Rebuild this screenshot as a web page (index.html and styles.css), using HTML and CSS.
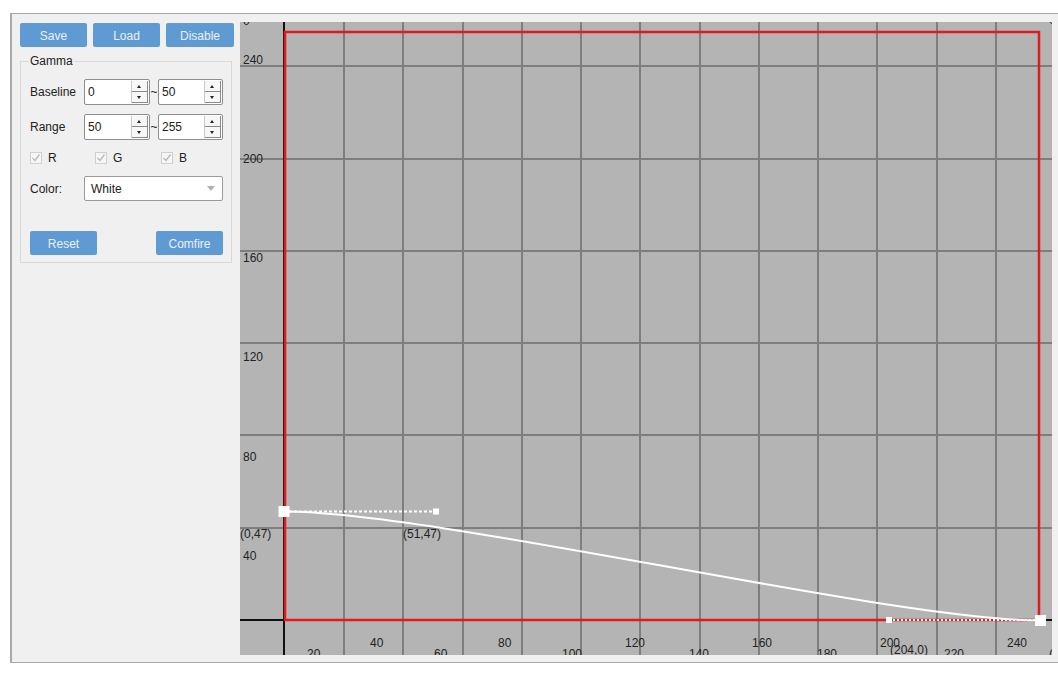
FILE: index.html
```html
<!DOCTYPE html>
<html>
<head>
<meta charset="utf-8">
<link rel="stylesheet" href="styles.css">
</head>
<body>
<div class="window">
  <aside class="side">
    <div class="toolbar">
      <button class="btn w67">Save</button>
      <button class="btn w67">Load</button>
      <button class="btn w68">Disable</button>
    </div>
    <fieldset class="gamma">
      <legend>Gamma</legend>
      <div class="row r1">
        <span class="lbl">Baseline</span>
        <div class="spin w66"><span class="val">0</span><div class="arrows"><i class="up"></i><i class="dn"></i></div></div>
        <span class="tilde">~</span>
        <div class="spin w65"><span class="val">50</span><div class="arrows"><i class="up"></i><i class="dn"></i></div></div>
      </div>
      <div class="row r2">
        <span class="lbl">Range</span>
        <div class="spin w66"><span class="val">50</span><div class="arrows"><i class="up"></i><i class="dn"></i></div></div>
        <span class="tilde">~</span>
        <div class="spin w65"><span class="val">255</span><div class="arrows"><i class="up"></i><i class="dn"></i></div></div>
      </div>
      <div class="checks">
        <label class="chk"><span class="box"><svg width="10" height="10" viewBox="0 0 10 10"><polyline points="1.5,5 4,7.5 8.5,1.5" fill="none" stroke="#b9b9b9" stroke-width="1.3"/></svg></span>R</label>
        <label class="chk"><span class="box"><svg width="10" height="10" viewBox="0 0 10 10"><polyline points="1.5,5 4,7.5 8.5,1.5" fill="none" stroke="#b9b9b9" stroke-width="1.3"/></svg></span>G</label>
        <label class="chk"><span class="box"><svg width="10" height="10" viewBox="0 0 10 10"><polyline points="1.5,5 4,7.5 8.5,1.5" fill="none" stroke="#b9b9b9" stroke-width="1.3"/></svg></span>B</label>
      </div>
      <div class="row color">
        <span class="lbl">Color:</span>
        <div class="select"><span>White</span><i class="caret"></i></div>
      </div>
      <div class="actions">
        <button class="btn w67">Reset</button>
        <button class="btn w67">Comfire</button>
      </div>
    </fieldset>
  </aside>
  <div class="chart">
    <svg class="plot" width="812" height="633" viewBox="0 0 812 633">
      <g stroke="#7e7e7e" stroke-width="2" fill="none">
        <path d="M104 0V633M163 0V633M223 0V633M282 0V633M341 0V633M400 0V633M460 0V633M519 0V633M578 0V633M637 0V633M697 0V633M756 0V633"/>
        <path d="M0 44H812M0 137H812M0 229H812M0 321H812M0 413H812M0 506H812"/>
      </g>
      <path d="M44 0V633M0 598H812" stroke="#111" stroke-width="2" fill="none"/>
      <rect x="45" y="10" width="754" height="588" fill="none" stroke="#e11b1d" stroke-width="2.5"/>
      <path d="M44 489.5C196 489.5 649 598 800 598.5" fill="none" stroke="#fff" stroke-width="2"/>
      <path d="M44 489.5H196" stroke="#fff" stroke-width="2" stroke-dasharray="3 2" fill="none"/>
      <path d="M649 598H800" stroke="#fff" stroke-width="2" stroke-dasharray="2 2" fill="none"/>
      <rect x="38.5" y="484" width="11" height="11" fill="#fff"/>
      <rect x="193" y="486.5" width="6" height="6" fill="#fff"/>
      <rect x="646" y="595" width="6" height="6" fill="#fff"/>
      <rect x="795" y="593" width="11" height="11" fill="#fff"/>
      <g class="ax">
        <text x="3" y="3">0</text>
        <text x="809" y="2">0</text>
        <text x="3" y="42">240</text>
        <text x="3" y="141">200</text>
        <text x="3" y="240">160</text>
        <text x="3" y="339">120</text>
        <text x="3" y="439">80</text>
        <text x="3" y="538">40</text>
        <text x="0" y="516">(0,47)</text>
        <text x="163" y="516">(51,47)</text>
        <text x="130" y="624.5">40</text>
        <text x="258" y="624.5">80</text>
        <text x="385" y="624.5">120</text>
        <text x="512" y="624.5">160</text>
        <text x="640" y="624.5">200</text>
        <text x="767" y="624.5">240</text>
        <text x="67" y="635.5">20</text>
        <text x="194" y="635.5">60</text>
        <text x="322" y="635.5">100</text>
        <text x="449" y="635.5">140</text>
        <text x="577" y="635.5">180</text>
        <text x="704" y="635.5">220</text>
        <text x="809" y="635.5">(</text>
        <text x="650" y="632">(204,0)</text>
      </g>
    </svg>
  </div>
</div>
</body>
</html>
```
FILE: styles.css
```css
html, body {
  margin: 0;
  background: #fff;
  overflow: hidden;
}
body {
  font: 12px "Liberation Sans", Arial, sans-serif;
  color: #222;
}
.window {
  margin: 13px 0 0 10px;
  width: 1060px;
  height: 650px;
  box-sizing: border-box;
  border: 1px solid #a9a9a9;
  border-left-width: 2px;
  border-right: 0;
  background: #f0f0f0;
  display: flex;
  padding: 8px 0 7px;
}
.side {
  width: 228px;
  flex: none;
}
.chart {
  width: 812px;
  height: 633px;
  flex: none;
  background: #b4b4b4;
  overflow: hidden;
}
.plot {
  display: block;
}
.ax {
  font: 12px "Liberation Sans", Arial, sans-serif;
  fill: #222;
}
.toolbar {
  display: flex;
  gap: 6px;
  margin: 1px 0 0 8px;
}
.btn {
  height: 24px;
  border: 0;
  border-radius: 2px;
  background: #5f9ad3;
  color: #eaf1f9;
  font: inherit;
  padding: 1px 0 0;
}
.w67 { width: 67px; }
.w68 { width: 68px; }
.gamma {
  margin: 7px 0 0 8px;
  width: 212px;
  box-sizing: border-box;
  border: 1px solid #d9d9d9;
  padding: 11px 8px 7px 8px;
  min-inline-size: 0;
}
.gamma legend {
  padding: 0 1px;
  line-height: 14px;
  color: #222;
}
.row {
  display: flex;
  align-items: center;
  padding-left: 1px;
}
.r1 { height: 26px; }
.r2 { height: 26px; margin-top: 9px; }
.lbl {
  width: 54px;
  flex: none;
}
.spin {
  height: 26px;
  box-sizing: border-box;
  border: 1px solid #8e8e8e;
  border-radius: 2px;
  background: #fff;
  display: flex;
  align-items: center;
  padding: 0 1px 0 3px;
}
.w66 { width: 66px; }
.w65 { width: 65px; }
.val {
  flex: 1;
}
.arrows {
  width: 15px;
  height: 22px;
  display: flex;
  flex-direction: column;
  border-left: 1px solid #c9c9c9;
  border-right: 1px solid #8a8a8a;
}
.arrows i {
  flex: 1;
  position: relative;
  background: #f7f7f7;
  border-bottom: 1px solid #8a8a8a;
}
.arrows i::after {
  content: "";
  position: absolute;
  left: 5px;
  top: 4px;
  border-left: 2px solid transparent;
  border-right: 2px solid transparent;
}
.arrows .up::after {
  border-bottom: 3px solid #222;
}
.arrows .dn::after {
  border-top: 3px solid #222;
  top: 4px;
}
.tilde {
  width: 8px;
  text-align: center;
  flex: none;
}
.checks {
  display: grid;
  grid-template-columns: 65px 66px auto;
  height: 14px;
  margin-top: 11px;
  padding-left: 1px;
  align-items: center;
}
.chk {
  display: flex;
  align-items: center;
  gap: 6px;
}
.box {
  width: 12px;
  height: 12px;
  box-sizing: border-box;
  border: 1px solid #cfcfcf;
  background: #f6f6f6;
  display: flex;
  align-items: center;
  justify-content: center;
}
.box svg {
  display: block;
}
.color {
  height: 25px;
  margin-top: 11px;
}
.select {
  width: 139px;
  height: 25px;
  box-sizing: border-box;
  border: 1px solid #9a9a9a;
  border-radius: 2px;
  background: #fff;
  display: flex;
  align-items: center;
  padding: 0 7px 0 6px;
}
.select span {
  flex: 1;
}
.caret {
  width: 0;
  height: 0;
  border-left: 4px solid transparent;
  border-right: 4px solid transparent;
  border-top: 5px solid #b0b0b0;
}
.actions {
  display: flex;
  justify-content: space-between;
  margin-top: 30px;
  padding-left: 1px;
}
```
